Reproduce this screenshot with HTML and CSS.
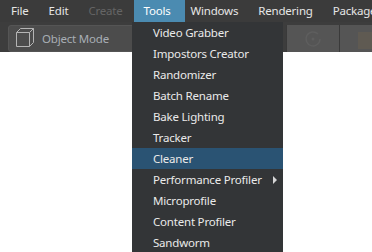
FILE: index.html
```html
<!DOCTYPE html>
<html lang="en">
<head>
    <meta charset="UTF-8">
    <title>Editor - Tools menu</title>
    <link rel="stylesheet" href="styles.css">
</head>
<body>
    <div class="menubar">
        <div class="menu">File</div>
        <div class="menu">Edit</div>
        <div class="menu disabled">Create</div>
        <div class="menu open">Tools</div>
        <div class="menu">Windows</div>
        <div class="menu">Rendering</div>
        <div class="menu">Packages</div>
    </div>

    <div class="toolbar">
        <div class="mode-box">
            <svg class="cube" width="20" height="21" viewBox="0 0 20 21">
                <path d="M1.5 5.5h13v14h-13z M1.5 5.5l4-4h13l-4 4 M18.5 1.5v14l-4 4" fill="none" stroke="#b4b4b4" stroke-width="1"/>
            </svg>
            <span>Object Mode</span>
        </div>
        <div class="tool-gap"></div>
        <div class="tool-btn">
            <svg width="22" height="22" viewBox="0 0 22 22">
                <path d="M18 11a7 7 0 1 1-2-5" fill="none" stroke="#5e5e5e" stroke-width="1.5"/>
                <circle cx="11" cy="11" r="1.5" fill="#5e5e5e"/>
            </svg>
        </div>
        <div class="tool-btn last">
            <div class="faded-box"></div>
        </div>
    </div>

    <ul class="dropdown">
        <li>Video Grabber</li>
        <li>Impostors Creator</li>
        <li>Randomizer</li>
        <li>Batch Rename</li>
        <li>Bake Lighting</li>
        <li>Tracker</li>
        <li class="active">Cleaner</li>
        <li class="has-sub">Performance Profiler <span class="arrow"></span></li>
        <li>Microprofile</li>
        <li>Content Profiler</li>
        <li>Sandworm</li>
    </ul>
</body>
</html>
```

FILE: styles.css
```css
body {
    margin: 0;
    background: #fff;
    font-family: "Noto Sans", "Open Sans", sans-serif;
    font-size: 11.5px;
    letter-spacing: -0.2px;
    overflow: hidden;
}

.menubar {
    display: flex;
    height: 22px;
    padding-left: 1px;
    background: #3b3b3b;
    white-space: nowrap;
}

.menu {
    padding: 0 10px;
    line-height: 21px;
    color: #e6e6e6;
}

.menu.disabled {
    color: #656565;
}

.menu.open {
    margin-left: 1px;
    background: #4b8bb1;
    box-shadow: 4px 0 0 #4b8bb1;
    color: #fff;
}

.toolbar {
    display: flex;
    height: 30px;
    background: #3d3d3d;
    padding: 3px 0 0 8px;
    box-sizing: border-box;
}

.mode-box {
    display: flex;
    align-items: center;
    gap: 7px;
    width: 275px;
    height: 27px;
    padding-left: 6px;
    box-sizing: border-box;
    background: #4c4c4c;
    border: 1px solid #555;
    border-radius: 3px;
    color: #a8aeb5;
}

.cube {
    margin-top: -3px;
}

.tool-gap {
    width: 6px;
}

.tool-btn {
    display: flex;
    align-items: center;
    justify-content: center;
    width: 52px;
    height: 27px;
    background: #555;
    border-left: 1px solid #3a3a3a;
}

.tool-btn.last {
    justify-content: flex-start;
    padding-left: 18px;
    box-sizing: border-box;
    flex: 1;
}

.faded-box {
    width: 14px;
    height: 17px;
    margin-top: 4px;
    background: #5f5a52;
}

.dropdown {
    position: absolute;
    left: 132px;
    top: 22px;
    width: 151px;
    margin: 0;
    padding: 0;
    list-style: none;
    background: #333537;
}

.dropdown li {
    position: relative;
    height: 21px;
    line-height: 21px;
    padding-left: 21px;
    color: #eaeaea;
    white-space: nowrap;
}

.dropdown li.active {
    background: #2a5373;
}

.arrow {
    position: absolute;
    left: 141px;
    top: 7px;
    border-left: 4px solid #d6d6d6;
    border-top: 4px solid transparent;
    border-bottom: 4px solid transparent;
}
```
